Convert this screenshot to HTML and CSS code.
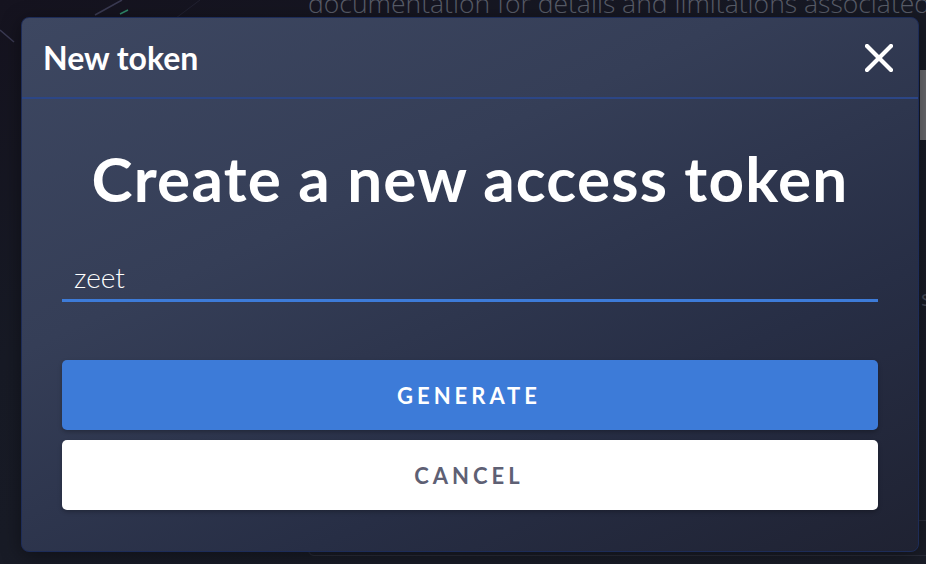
FILE: index.html
```html
<!DOCTYPE html>
<html lang="en">
<head>
<meta charset="utf-8">
<title>New token</title>
<link rel="stylesheet" href="styles.css">
</head>
<body>
<div class="page">
  <svg class="bg-lines" width="330" height="140" viewBox="0 0 330 140" aria-hidden="true">
    <line x1="0" y1="30" x2="14" y2="42" stroke="#3a3a52" stroke-width="1.5"/>
    <line x1="95" y1="15" x2="122" y2="0" stroke="#3a3a52" stroke-width="1.5"/>
    <line x1="120" y1="14" x2="128" y2="10" stroke="#2f8a6a" stroke-width="1.5"/>
    <line x1="200" y1="0" x2="140" y2="45" stroke="#222230" stroke-width="1"/>
  </svg>
  <p class="bg-text">documentation for details and limitations associated</p>
  <div class="bg-card"></div>
  <div class="bg-side">s</div>
  <div class="scrollbar"></div>

  <div class="modal">
    <div class="modal-header">
      <h2 class="modal-title">New token</h2>
      <button class="close" aria-label="Close">
        <svg width="28" height="28" viewBox="0 0 28 28"><path d="M2 2L26 26M26 2L2 26" stroke="#fff" stroke-width="4.2" stroke-linecap="square"/></svg>
      </button>
    </div>
    <div class="modal-body">
      <h1 class="heading">Create a new access token</h1>
      <div class="field">zeet</div>
      <div class="actions">
        <button class="btn btn-primary">GENERATE</button>
        <button class="btn btn-cancel">CANCEL</button>
      </div>
    </div>
  </div>
</div>
</body>
</html>
```

FILE: styles.css
```css
* { box-sizing: border-box; }
html, body { margin: 0; padding: 0; }
body {
  width: 926px;
  height: 564px;
  overflow: hidden;
  background: #181b26;
  font-family: Lato, "Noto Sans", sans-serif;
}
.page {
  position: relative;
  width: 926px;
  height: 564px;
  background: linear-gradient(160deg, #15131f 0%, #171a25 40%, #1a1d28 100%);
}
.bg-lines { position: absolute; left: 0; top: 0; }
.bg-text {
  position: absolute;
  left: 308px;
  top: -15px;
  margin: 0;
  font-family: "Open Sans", sans-serif;
  font-weight: 300;
  font-size: 26.5px;
  color: #585c68;
  white-space: nowrap;
}
.bg-card {
  position: absolute;
  left: 308px;
  top: 520px;
  width: 640px;
  height: 36px;
  border: 1px solid #2a2d3a;
  border-radius: 6px;
}
.bg-side {
  position: absolute;
  left: 921px;
  top: 282px;
  font-family: "Open Sans", sans-serif;
  font-size: 22px;
  color: #444856;
}
.scrollbar {
  position: absolute;
  left: 920px;
  top: 70px;
  width: 6px;
  height: 70px;
  background: #6a6a6e;
}
.modal {
  position: absolute;
  left: 21px;
  top: 17px;
  width: 898px;
  height: 535px;
  border: 1px solid #1d2c58;
  border-radius: 8px;
  background: linear-gradient(155deg, #3d4761 0%, #353e57 35%, #272e45 70%, #1f2232 100%);
  box-shadow: 0 4px 20px rgba(0,0,0,0.4);
  overflow: hidden;
}
.modal-header {
  height: 81px;
  border-bottom: 2px solid #2c4686;
  display: flex;
  align-items: center;
  justify-content: space-between;
  padding: 0 25px 0 21px;
}
.modal-title {
  margin: 0;
  font-size: 32px;
  font-weight: 700;
  color: #fff;
  letter-spacing: 0;
  padding-top: 0;
}
.close {
  background: none;
  border: 0;
  padding: 0;
  width: 28px;
  height: 28px;
  display: flex;
  cursor: pointer;
}
.modal-body {
  padding: 43px 40px 0;
}
.heading {
  margin: 0;
  text-align: center;
  font-size: 62px;
  line-height: 72px;
  font-weight: 700;
  letter-spacing: 1.2px;
  color: #fff;
}
.field {
  margin-top: 46px;
  padding: 0 12px 5px;
  font-size: 28px;
  line-height: 34px;
  font-weight: 300;
  color: #fff;
  border-bottom: 3px solid #3d7bd8;
}
.actions {
  margin-top: 58px;
  display: flex;
  flex-direction: column;
  gap: 10px;
}
.btn {
  height: 70px;
  border: 0;
  border-radius: 5px;
  font-family: Lato, "Noto Sans", sans-serif;
  font-weight: 700;
  font-size: 22px;
  letter-spacing: 4px;
  padding-left: 4px;
  box-shadow: 0 2px 4px rgba(0,0,0,0.25);
}
.btn-primary { background: #3d7bd8; color: #fff; }
.btn-cancel { background: #fff; color: #5e6074; }
```
